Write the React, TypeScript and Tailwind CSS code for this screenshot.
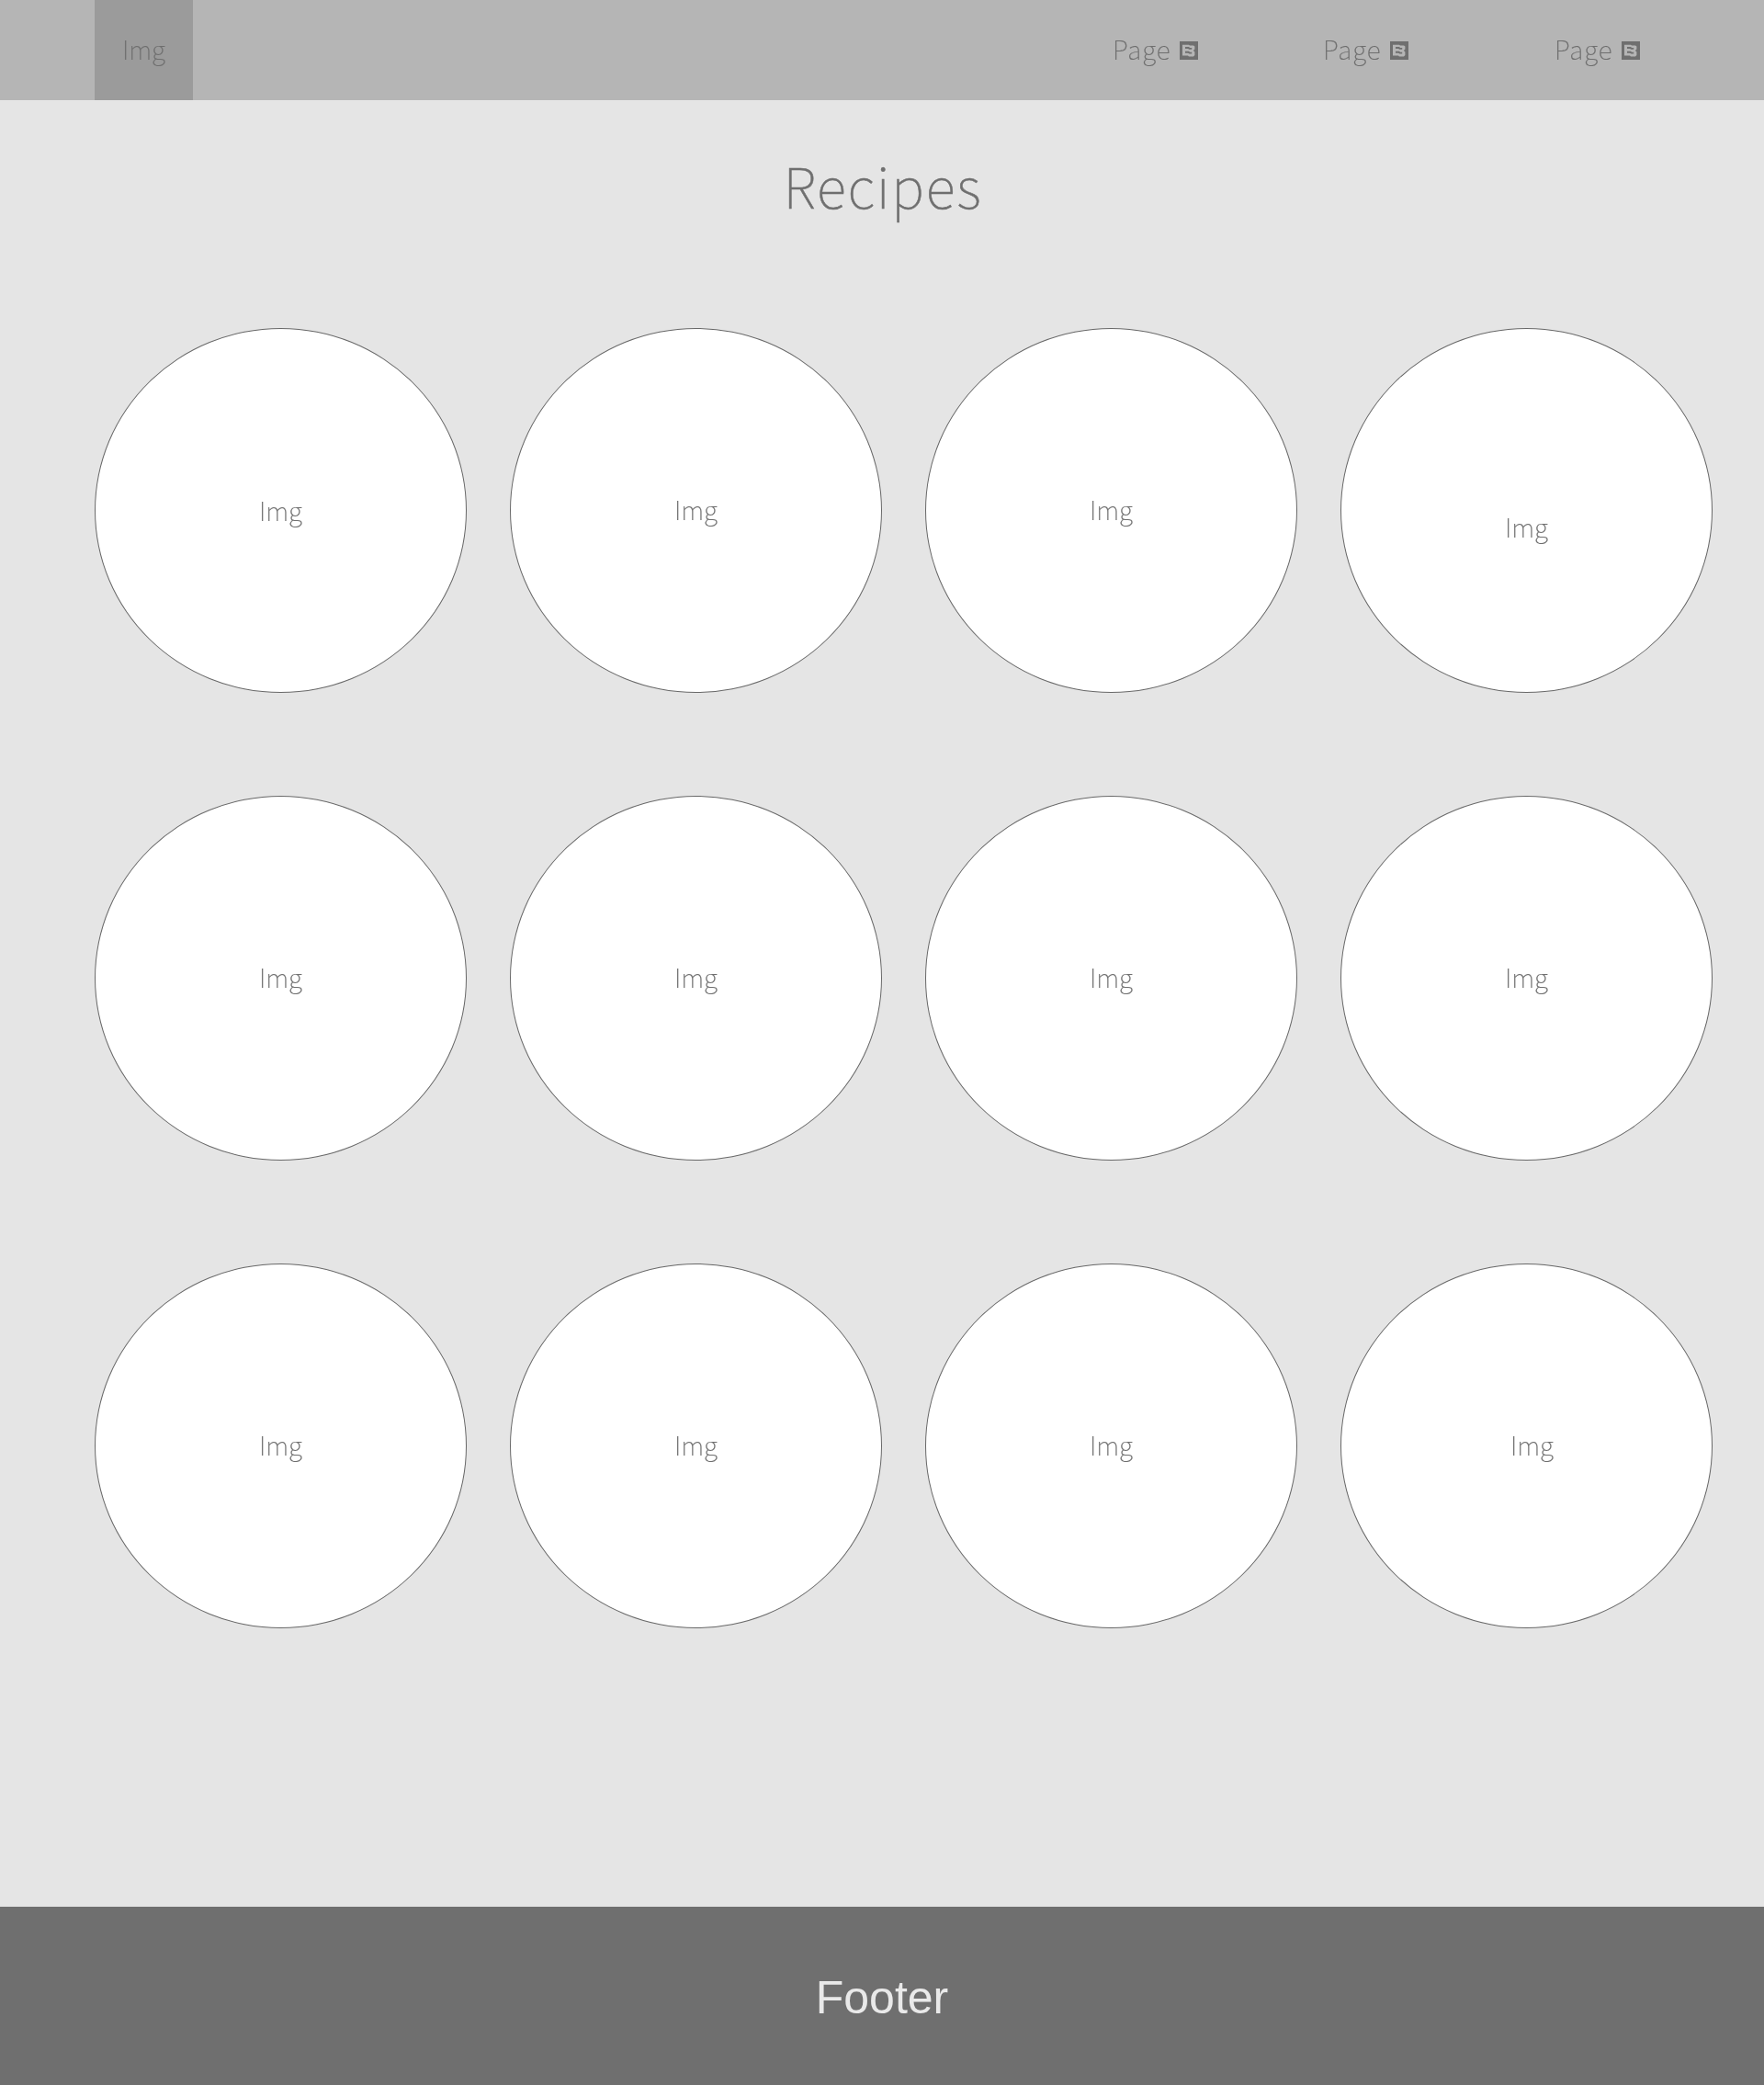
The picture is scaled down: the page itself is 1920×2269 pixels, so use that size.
const label = "text-[28px] leading-[35px] [-webkit-text-stroke:0.2px_#6f6f6f]";

function PageIcon() {
  return (
    <svg width="20" height="20" viewBox="0 0 20 20" className="block">
      <rect width="20" height="20" fill="#6f6f6f" />
      <path
        d="M3 3.7H10L11 4.4H15L16.4 5.6V8.6L14.9 10L16.4 11.4V15L15 16.4H10L9 15.4H3Z"
        fill="#b5b5b5"
      />
      <path
        d="M6 6H10L11 6.9H13.2V8.8H10.2L9.2 7.9H6ZM6 10.8H10L11 11.7H13.2V13.6H10.2L9.2 12.7H6Z"
        fill="#6f6f6f"
      />
    </svg>
  );
}

function NavItem({ className }: { className: string }) {
  return (
    <a className={"flex h-5 items-center " + className}>
      <span className={"w-[73px] pb-[3px] tracking-[1px] " + label}>Page</span>
      <PageIcon />
    </a>
  );
}

const rows = [
  ["pb-px", "pb-[3px]", "pb-[3px]", "pt-[35px]"],
  ["pb-[3px]", "pb-[3px]", "pb-[3px]", "pb-[3px]"],
  ["pb-[3px]", "pb-[3px]", "pb-[3px]", "pb-[3px] pl-3"],
];

export default function App() {
  return (
    <div className="bg-[#e5e5e5]">
      <div className="flex h-[2269px] w-full flex-col font-['Noto_Sans_CJK_SC',sans-serif] font-thin text-[#6f6f6f] will-change-transform">
        <header className="flex h-[109px] bg-[#b5b5b5] pl-[103px]">
          <div className={"flex h-full w-[107px] items-center justify-center bg-[#9b9b9b] pb-[3px] " + label}>Img</div>
          <nav className="ml-auto flex pt-[45px] pr-[135px]">
            <NavItem className="mr-[136px]" />
            <NavItem className="mr-[159px]" />
            <NavItem className="" />
          </nav>
        </header>
        <h1 className="mt-[54px] pl-[2px] text-center text-[60px] leading-[75px] tracking-[1.8px] [-webkit-text-stroke:0.5px_#6f6f6f]">
          Recipes
        </h1>
        <main className="mt-[119px] ml-[103px] flex flex-col gap-[112px]">
          {rows.map((row, i) => (
            <div key={i} className="flex gap-[47px]">
              {row.map((offset, j) => (
                <div
                  key={j}
                  className={
                    "flex h-[397px] w-[405px] items-center justify-center rounded-[50%] border border-[#686868] bg-white " +
                    label + " " + offset
                  }
                >
                  Img
                </div>
              ))}
            </div>
          ))}
        </main>
        <footer className="mt-auto flex h-[194px] items-center justify-center bg-[#6f6f6f] pt-[3px] font-['Liberation_Sans',Arial,sans-serif] text-[50px] leading-[58px] font-normal text-[#e9e9e9]">
          Footer
        </footer>
      </div>
    </div>
  );
}
